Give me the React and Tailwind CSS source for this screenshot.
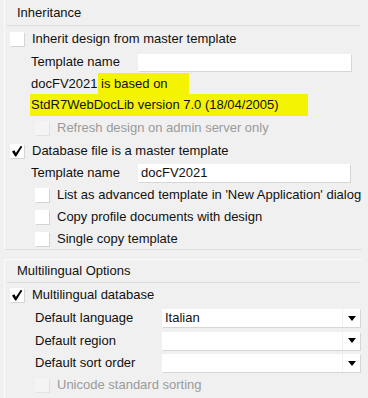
import React from 'react';

const Check = () => (
  <svg width="14" height="14" viewBox="0 0 14 14" className="block">
    <path d="M2 7.4 L4.4 6.2 L5.9 9 L10.8 1.8 L12.3 2.8 L6.2 12.4 L5.2 12.4 Z" fill="#000" />
  </svg>
);

const Box = ({ checked, disabled }) => (
  <div
    className={`w-[14px] h-[14px] shrink-0 ${
      disabled ? 'bg-[#f4f4f4] shadow-[1px_1px_0_#e2e2e2]' : 'bg-white shadow-[1px_1px_0_#d4d4d4]'
    }`}
  >
    {checked && <Check />}
  </div>
);

const Arrow = () => (
  <svg width="8" height="5" viewBox="0 0 8 5" className="block">
    <path d="M0 0 H8 L4 5 Z" fill="#000" />
  </svg>
);

const Select = ({ value }) => (
  <div className="shrink-0 w-[198px] h-[18px] flex bg-white shadow-[1px_1px_0_#d6d6d6]">
    <div className="flex-1 pl-[3px] leading-[18px]">{value}</div>
    <div className="w-[18px] h-full flex items-center justify-center border-l border-[#f0f0f0]">
      <Arrow />
    </div>
  </div>
);

const Header = ({ children, h }) => (
  <div className={`${h} flex items-center pl-[10px] border-b border-[#dadada] mx-[2px]`}>
    {children}
  </div>
);

export default function App() {
  return (
    <div
      className="w-[368px] h-[398px] bg-[#f0f0f0] text-[13px] text-[#111] overflow-hidden"
      style={{ fontFamily: '"Liberation Sans", Arial, sans-serif' }}
    >
      <div className="ml-[4px] w-[358px] h-[250px] border-l border-[#fafafa] border-b border-b-[#dedede]">
        <Header h="h-[26px]">Inheritance</Header>

        <div className="h-[26px] flex items-center pl-[5px]">
          <Box />
          <span className="ml-[8px]">Inherit design from master template</span>
        </div>

        <div className="h-[20px] flex items-center pl-[26px]">
          <span className="w-[107px] shrink-0">Template name</span>
          <div className="shrink-0 w-[213px] h-[17px] bg-white shadow-[1px_1px_0_#d6d6d6]" />
        </div>

        <div className="h-[1px]" />
        <div className="h-[21px] flex items-stretch pl-[26px]">
          <span className="leading-[21px]">docFV2021</span>
          <span className="leading-[21px] bg-[#f4f400] w-[91px] whitespace-nowrap">&nbsp;is based on</span>
        </div>
        <div className="h-[22px] flex items-stretch pl-[25px]">
          <span className="leading-[22px] bg-[#f4f400] pl-[1px] w-[278px] whitespace-nowrap">
            StdR7WebDocLib version 7.0 (18/04/2005)
          </span>
        </div>

        <div className="h-[24px] flex items-center pl-[30px]">
          <Box disabled />
          <span className="ml-[8px] text-[#9a9a9a]">Refresh design on admin server only</span>
        </div>

        <div className="h-[22px] flex items-center pl-[5px]">
          <Box checked />
          <span className="ml-[8px]">Database file is a master template</span>
        </div>

        <div className="h-[21px] flex items-center pl-[26px]">
          <span className="w-[107px] shrink-0">Template name</span>
          <div className="shrink-0 w-[212px] h-[18px] pl-[3px] leading-[18px] bg-white shadow-[1px_1px_0_#d6d6d6]">
            docFV2021
          </div>
        </div>

        <div className="h-[23px] flex items-center pl-[30px]">
          <Box />
          <span className="ml-[8px] whitespace-nowrap">List as advanced template in 'New Application' dialog</span>
        </div>
        <div className="h-[22px] flex items-center pl-[30px]">
          <Box />
          <span className="ml-[8px]">Copy profile documents with design</span>
        </div>
        <div className="h-[21px] flex items-center pl-[30px]">
          <Box />
          <span className="ml-[8px]">Single copy template</span>
        </div>
      </div>

      <div className="mt-[9px] ml-[4px] w-[358px] h-[139px] border-l border-t border-[#fafafa]">
        <Header h="h-[23px]">Multilingual Options</Header>

        <div className="h-[24px] flex items-center pl-[5px]">
          <Box checked />
          <span className="ml-[8px]">Multilingual database</span>
        </div>

        <div className="h-[22px] flex items-center pl-[30px]">
          <span className="w-[127px] shrink-0">Default language</span>
          <Select value="Italian" />
        </div>
        <div className="h-[23px] flex items-center pl-[30px]">
          <span className="w-[127px] shrink-0">Default region</span>
          <Select value="" />
        </div>
        <div className="h-[22px] flex items-center pl-[30px]">
          <span className="w-[127px] shrink-0">Default sort order</span>
          <Select value="" />
        </div>
        <div className="h-[21px] flex items-center pl-[30px]">
          <Box disabled />
          <span className="ml-[8px] text-[#9a9a9a]">Unicode standard sorting</span>
        </div>
      </div>
    </div>
  );
}
